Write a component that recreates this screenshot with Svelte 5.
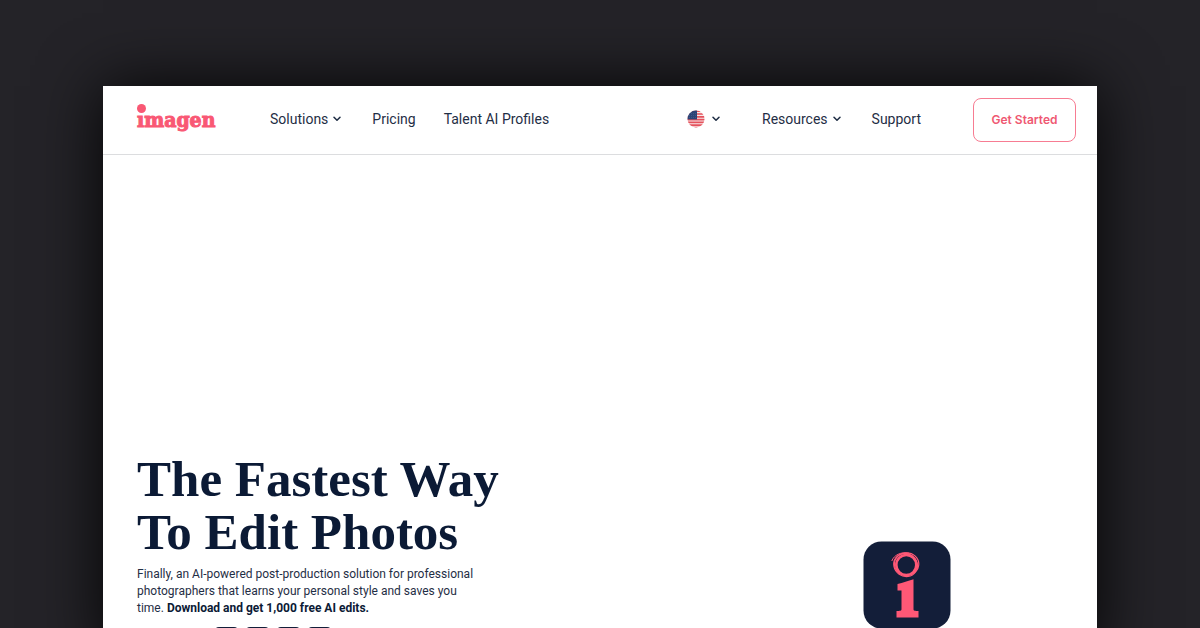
<script>
  const tiles = [1, 2, 3, 4];
</script>

{#snippet chevron()}
  <svg class="chevron" viewBox="0 0 8 6" aria-hidden="true"><path d="M1 1.2 L4 4.3 L7 1.2" /></svg>
{/snippet}

<div class="stage">
  <div class="window">
    <header>
      <a class="logo" href="#home"><span class="dot"></span>ımagen</a>
      <nav class="primary" aria-label="Primary">
        <button class="link solutions">Solutions {@render chevron()}</button>
        <a class="link" href="#pricing">Pricing</a>
        <a class="link" href="#talent">Talent AI Profiles</a>
      </nav>
      <nav class="secondary" aria-label="Secondary">
        <button class="link language" aria-label="Language">
          <svg class="flag" viewBox="0 0 18 18" aria-hidden="true">
            <clipPath id="round"><circle cx="9" cy="9" r="8.5" /></clipPath>
            <g clip-path="url(#round)">
              <rect width="18" height="18" fill="#f7e9ea" />
              <path d="M0 1.2H18M0 4H18M0 6.8H18M0 9.6H18M0 12.4H18M0 15.2H18M0 17.6H18" stroke="#e5525c" stroke-width="1.7" />
              <rect width="10" height="9.4" fill="#2c4375" />
              <path d="M2 3.5H9M2 5.5H9M2 7.5H9" stroke="#4a6193" stroke-width=".6" stroke-dasharray="1 1" />
            </g>
          </svg>
          {@render chevron()}
        </button>
        <button class="link">Resources {@render chevron()}</button>
        <a class="link" href="#support">Support</a>
      </nav>
      <a class="cta" href="#start">Get Started</a>
    </header>

    <main>
      <section>
        <h1>The Fastest Way<br />To Edit Photos</h1>
        <p>
          Finally, an AI-powered post-production solution for professional<br />
          photographers that learns your personal style and saves you<br />
          time. <strong>Download and get 1,000 free AI edits.</strong>
        </p>
        <div class="tiles">
          {#each tiles as tile (tile)}<span></span>{/each}
        </div>
      </section>
      <svg class="app" viewBox="0 0 88 88" role="img" aria-label="Imagen app">
        <rect x=".5" y=".5" width="87" height="87" rx="18" fill="#131e39" />
        <g fill="none" stroke="#ff5876">
          <circle cx="43.3" cy="24" r="10" stroke-width="2.6" />
          <ellipse cx="43.6" cy="23" rx="12.2" ry="11.2" stroke-width="1.2" />
          <ellipse cx="42.6" cy="24" rx="12.2" ry="11.2" stroke-width="1.2" transform="rotate(35 42.6 24)" />
          <path d="M28.8 20 C31 14 38 10.5 46 12.2" stroke-width="1" />
        </g>
        <path d="M34.5 43 C40 41.8 45 39.8 50.5 38.3 V68 C50.5 70 52 69.8 55.5 70 V76.5 H33.5 V70 C37 69.8 38.5 70 38.5 68 V49.5 H34.5 Z" fill="#ff5876" />
      </svg>
    </main>
  </div>
</div>

<style>
  :global(body) {
    background: #242328;
  }
  .stage {
    box-sizing: border-box;
    height: 100vh;
    padding: 86px 103px 0;
    overflow: hidden;
    font-family: Inter, "Liberation Sans", sans-serif;
    color: #1f2e45;
  }
  .window {
    min-height: 100%;
    background: #fff;
    box-shadow: 0 0 60px rgba(0, 0, 0, 0.9);
  }
  header {
    display: flex;
    align-items: center;
    box-sizing: border-box;
    height: 69px;
    padding: 0 21px 0 34px;
    border-bottom: 1px solid #dcdddf;
  }
  a {
    color: inherit;
    text-decoration: none;
  }
  .logo {
    position: relative;
    width: 79px;
    margin-right: 54px;
    color: #f95874;
    font: bold 21px/28px "DejaVu Serif Condensed", "DejaVu Serif", serif;
    -webkit-text-stroke: 1px #f95874;
  }
  .dot {
    position: absolute;
    top: -2px;
    left: 0;
    width: 9px;
    height: 9px;
    border-radius: 50%;
    background: #f95874;
  }
  nav {
    display: flex;
    align-items: center;
    padding-bottom: 2px;
  }
  .primary {
    gap: 28px;
  }
  .solutions {
    margin-right: 3px;
  }
  .secondary {
    gap: 31px;
    margin-left: auto;
  }
  .language {
    margin-right: 11px;
  }
  .link {
    display: flex;
    align-items: center;
    gap: 5px;
    padding: 0;
    border: 0;
    background: none;
    color: inherit;
    font: 400 14px/20px Roboto, "Liberation Sans", sans-serif;
    white-space: nowrap;
  }
  .chevron {
    width: 8px;
    height: 6px;
    fill: none;
    stroke: currentColor;
    stroke-width: 1.5;
    stroke-linecap: round;
    stroke-linejoin: round;
  }
  .flag {
    width: 18px;
    height: 18px;
    margin-right: 2px;
  }
  .cta {
    box-sizing: border-box;
    width: 103px;
    margin-left: 52px;
    border: 1px solid #f77c92;
    border-radius: 8px;
    color: #ef5872;
    font-size: 12px;
    font-weight: 600;
    line-height: 42px;
    text-align: center;
  }
  main {
    display: flex;
    align-items: flex-start;
    justify-content: space-between;
    padding: 298px 146px 0 34px;
  }
  h1 {
    margin: 0;
    color: #0b1a35;
    font: bold 51px/53px "Liberation Serif", serif;
    white-space: nowrap;
  }
  p {
    margin: 7px 0 0;
    font: 12px/17px Roboto, "Liberation Sans", sans-serif;
    white-space: nowrap;
  }
  strong {
    color: #0b1a35;
    font-weight: 700;
  }
  .tiles {
    display: flex;
    gap: 8px;
    margin: 10px 0 0 78px;
  }
  .tiles span {
    width: 23px;
    height: 30px;
    border-radius: 4px;
    background: #131e39;
  }
  .app {
    width: 88px;
    height: 88px;
    margin-top: 88px;
  }
</style>
